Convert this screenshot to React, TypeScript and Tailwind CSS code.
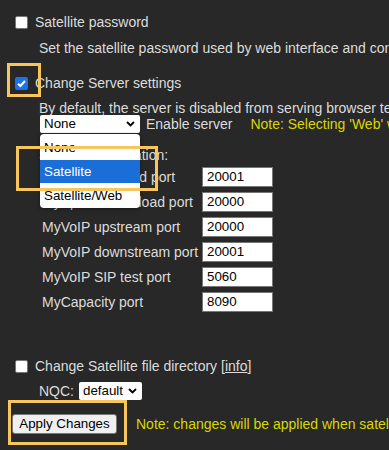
import React from "react";

const Chevron = () => (
  <svg width="9" height="6" viewBox="0 0 9 6" className="shrink-0">
    <polyline points="1,1 4.5,4.5 8,1" fill="none" stroke="#000" strokeWidth="1.8" />
  </svg>
);

const Box = ({ checked }: { checked?: boolean }) =>
  checked ? (
    <div className="w-[13px] h-[13px] rounded-[2px] bg-[#1a73e8] flex items-center justify-center shrink-0">
      <svg width="11" height="11" viewBox="0 0 11 11">
        <polyline points="2,5.8 4.4,8 9,3" fill="none" stroke="#fff" strokeWidth="2" />
      </svg>
    </div>
  ) : (
    <div className="w-[13px] h-[13px] rounded-[2px] bg-white border border-[#767676] shrink-0" />
  );

const rows: [string, string][] = [
  ["MySpeed upload port", "20001"],
  ["MySpeed download port", "20000"],
  ["MyVoIP upstream port", "20000"],
  ["MyVoIP downstream port", "20001"],
  ["MyVoIP SIP test port", "5060"],
  ["MyCapacity port", "8090"],
];

export default function App() {
  return (
    <div
      className="relative w-[389px] h-[450px] overflow-hidden bg-[#282828] text-[#dcdcdc] text-[14px] leading-[16px] whitespace-nowrap"
      style={{ fontFamily: '"Liberation Sans", Arial, sans-serif' }}
    >
      {/* Satellite password */}
      <div className="flex items-center h-[16px] mt-[14px] pl-[15px]">
        <Box />
        <span className="ml-[7px] shrink-0">Satellite password</span>
      </div>
      <div className="mt-[10px] pl-[39px]">
        Set the satellite password used by web interface and connecting clients
      </div>

      {/* Change Server settings */}
      <div className="flex items-center h-[16px] mt-[19px] pl-[15px]">
        <Box checked />
        <span className="ml-[7px] shrink-0">Change Server settings</span>
      </div>
      <div className="mt-[9px] pl-[39px]">
        By default, the server is disabled from serving browser tests to clients.
      </div>
      <div className="flex items-center h-[18px] mt-[-1px] pl-[40px]">
        <div className="shrink-0 w-[100px] h-[18px] bg-white text-black text-[13.33px] flex items-center justify-between pl-[4px] pr-[5px] rounded-[2px]">
          <span>None</span>
          <Chevron />
        </div>
        <span className="shrink-0 ml-[6px]">Enable server</span>
        <span className="shrink-0 ml-[18px] text-[#d8d800]">
          Note: Selecting 'Web' will allow browser based testing
        </span>
      </div>
      <div className="mt-[14px] pl-[39px]">Server configuration:</div>

      <div className="mt-[4px] flex flex-col gap-[5px]">
        {rows.map(([label, val]) => (
          <div key={label} className="flex items-center h-[20px]">
            <div className="shrink-0 w-[202px] pl-[42px]">{label}</div>
            <div className="shrink-0 w-[71px] h-[20px] bg-white border border-[#767676] text-black text-[13.33px] flex items-center pl-[4px]">
              {val}
            </div>
          </div>
        ))}
      </div>

      {/* Change Satellite file directory */}
      <div className="flex items-center h-[16px] mt-[46px] pl-[15px]">
        <Box />
        <span className="shrink-0 ml-[7px]">
          Change Satellite file directory [<span className="underline">info</span>]
        </span>
      </div>
      <div className="flex items-center h-[18px] mt-[8px] pl-[39px]">
        <span className="shrink-0">NQC:</span>
        <div className="shrink-0 ml-[5px] w-[63px] h-[18px] bg-white text-black text-[13.33px] flex items-center justify-between pl-[4px] pr-[5px] rounded-[2px]">
          <span>default</span>
          <Chevron />
        </div>
      </div>

      <div className="flex items-center h-[20px] mt-[14px] pl-[12px]">
        <div className="shrink-0 w-[105px] h-[20px] bg-[#efefef] border border-[#767676] rounded-[3px] text-black text-[13.33px] flex items-center justify-center">
          Apply Changes
        </div>
        <span className="shrink-0 ml-[19px] text-[#d8d800]">
          Note: changes will be applied when satellite restarts
        </span>
      </div>

      {/* Open dropdown list */}
      <div className="absolute left-[40px] top-[134px] w-[100px] h-[74px] bg-white rounded-[4px] shadow-[0_1px_4px_rgba(0,0,0,0.4)] text-black text-[13.33px] flex flex-col overflow-hidden">
        <div className="h-[26px] flex items-center pl-[4px] pt-[1px]">None</div>
        <div className="h-[23px] flex items-center pl-[4px] bg-[#1a6ed8] text-white">Satellite</div>
        <div className="h-[25px] flex items-center pl-[4px]">Satellite/Web</div>
      </div>

      {/* Highlight annotations */}
      <div className="absolute left-[7px] top-[63px] w-[34px] h-[34px] border-[3px] border-[#f8c45c]" />
      <div className="absolute left-[16px] top-[146px] w-[142px] h-[45px] border-[3px] border-[#f8c45c]" />
      <div className="absolute left-[8px] top-[400px] w-[119px] h-[45px] border-[3px] border-[#f8c45c]" />
    </div>
  );
}
